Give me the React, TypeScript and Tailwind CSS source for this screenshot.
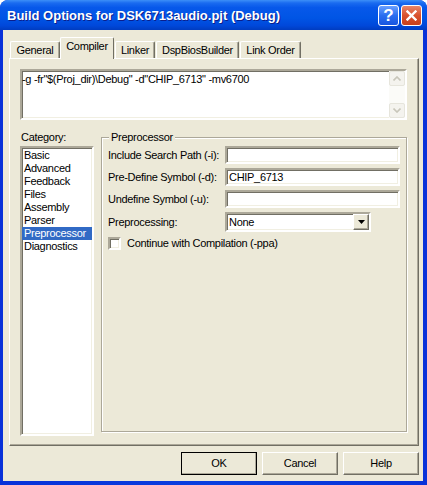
import React from "react";

const categories = [
  "Basic",
  "Advanced",
  "Feedback",
  "Files",
  "Assembly",
  "Parser",
  "Preprocessor",
  "Diagnostics",
];

const tabs = [
  { label: "General", w: "w-[50px]" },
  { label: "Compiler", w: "w-[54px]" },
  { label: "Linker", w: "w-[40px]" },
  { label: "DspBiosBuilder", w: "w-[83px]" },
  { label: "Link Order", w: "w-[61px]" },
];

// classic sunken 2px border used by edits, list and combo
const sunken =
  "border-2 border-t-[#ACA899] border-l-[#ACA899] border-b-white border-r-white shadow-[inset_1px_1px_0_#716F64,inset_-1px_-1px_0_#F1EFE2]";

const raised =
  "border border-t-white border-l-white border-r-[#716F64] border-b-[#716F64] shadow-[inset_-1px_-1px_0_#ACA899]";

const Field: React.FC<{ label: string; value?: string; className?: string }> = ({ label, value, className }) => (
  <div className={`flex items-center h-[18px] ${className || ""}`}>
    <div className="w-[117px] shrink-0 whitespace-nowrap">{label}</div>
    <div className={`w-[175px] h-[18px] bg-white flex items-center pl-[2px] ${sunken}`}>{value}</div>
  </div>
);

const Button: React.FC<{ label: string; def?: boolean }> = ({ label, def }) => (
  <div
    className={`w-[76px] h-[23px] flex items-center justify-center bg-[#ECE9D8] ${
      def ? "outline outline-1 outline-black -outline-offset-1 " : ""
    }${raised}`}
  >
    {label}
  </div>
);

const App: React.FC = () => {
  return (
    <div className="w-[427px] h-[485px] bg-white font-['Liberation_Sans',Arial,sans-serif] text-[11px] tracking-[-0.3px] text-black leading-none select-none">
      <div className="w-[427px] h-[485px] rounded-t-[8px] overflow-hidden flex flex-col bg-gradient-to-r from-[#0831D9] via-[#0A3FE0] to-[#0831D9]">
        {/* title bar */}
        <div className="h-[30px] shrink-0 flex items-center bg-[linear-gradient(to_bottom,#3C8FF8_0%,#1A6BF0_10%,#0758EA_25%,#0055E5_60%,#0048DA_85%,#003CC0_100%)]">
          <div className="ml-[7px] flex-1 text-white font-bold text-[13px] tracking-normal [text-shadow:1px_1px_0_#0B1E8C]">
            Build Options for DSK6713audio.pjt (Debug)
          </div>
          <div className="w-[21px] h-[21px] rounded-[3px] border border-white bg-[linear-gradient(to_bottom,#6AA0FF,#2A6EF0_50%,#1755E0)] flex items-center justify-center text-white font-bold text-[17px] tracking-normal">
            ?
          </div>
          <div className="ml-[2px] mr-[5px] w-[21px] h-[21px] rounded-[3px] border border-white bg-[linear-gradient(to_bottom,#E8866A,#D9522E_50%,#C8401C)] flex items-center justify-center">
            <svg width="11" height="11" viewBox="0 0 11 11">
              <path d="M1.5 1.5 L9.5 9.5 M9.5 1.5 L1.5 9.5" stroke="white" strokeWidth="2.4" strokeLinecap="square" />
            </svg>
          </div>
        </div>

        {/* client area */}
        <div className="flex-1 ml-[3px] mr-[4px] mb-[4px] bg-[#ECE9D8] flex flex-col">
          {/* tabs */}
          <div className="flex items-end h-[21px] mt-[7px] ml-[7px]">
            {tabs.map((t, i) =>
              i === 1 ? (
                <div
                  key={t.label}
                  className={`${t.w} h-[22px] relative top-[1px] z-10 bg-[#ECE9D8] border-l border-t border-r border-l-white border-t-white border-r-[#716F64] rounded-t-[2px] flex items-start justify-center pt-[3px]`}
                >
                  {t.label}
                </div>
              ) : (
                <div
                  key={t.label}
                  className={`${t.w} h-[17px] bg-[#ECE9D8] border-l border-t border-r border-l-white border-t-white border-r-[#716F64] shadow-[inset_-1px_0_0_#ACA899] rounded-t-[2px] flex items-center justify-center ${
                    i === 0 ? "" : "ml-[1px]"
                  }`}
                >
                  {t.label}
                </div>
              )
            )}
          </div>

          {/* tab page */}
          <div className={`ml-[6px] w-[410px] h-[388px] flex flex-col px-[10px] pt-[10px] ${raised}`}>
            <div className={`w-[387px] h-[51px] bg-white flex ${sunken}`}>
              <div className="flex-1 pt-[3px] whitespace-nowrap">
                {'-g -fr"$(Proj_dir)\\Debug" -d"CHIP_6713" -mv6700'}
              </div>
              <div className="w-[16px] bg-[#FBFBF8] flex flex-col justify-between">
                <div className="h-[15px] rounded-[2px] border border-[#E6E5DC] bg-[#F4F3EE] flex items-center justify-center">
                  <svg width="8" height="5" viewBox="0 0 8 5">
                    <path d="M0.5 4.5 L4 1 L7.5 4.5" stroke="#C8C6BA" strokeWidth="1.6" fill="none" />
                  </svg>
                </div>
                <div className="h-[15px] rounded-[2px] border border-[#E6E5DC] bg-[#F4F3EE] flex items-center justify-center">
                  <svg width="8" height="5" viewBox="0 0 8 5">
                    <path d="M0.5 0.5 L4 4 L7.5 0.5" stroke="#C8C6BA" strokeWidth="1.6" fill="none" />
                  </svg>
                </div>
              </div>
            </div>

            <div className="flex mt-[11px] gap-[7px]">
              {/* category list */}
              <div className="w-[74px] flex flex-col">
                <div className="h-[15px] pl-[1px] pt-[1px]">Category:</div>
                <div className={`h-[290px] bg-white pt-[1px] ${sunken}`}>
                  {categories.map((c) => (
                    <div
                      key={c}
                      className={`h-[13px] flex items-center pl-[2px] ${
                        c === "Preprocessor" ? "bg-[#316AC5] text-white" : ""
                      }`}
                    >
                      {c}
                    </div>
                  ))}
                </div>
              </div>

              {/* group box */}
              <div className="mt-[6px] w-[306px] h-[295px] relative border border-[#ACA899] shadow-[1px_1px_0_white,inset_1px_1px_0_white] pl-[6px] pt-[8px]">
                <div className="absolute -top-[7px] left-[7px] bg-[#ECE9D8] px-[2px] h-[13px] flex items-center">
                  Preprocessor
                </div>
                <Field label="Include Search Path (-i):" />
                <Field label="Pre-Define Symbol (-d):" value="CHIP_6713" className="mt-[4px]" />
                <Field label="Undefine Symbol (-u):" className="mt-[4px]" />
                <div className="flex items-center h-[20px] mt-[4px]">
                  <div className="w-[117px] shrink-0">Preprocessing:</div>
                  <div className={`w-[146px] h-[20px] bg-white flex items-center ${sunken}`}>
                    <div className="flex-1 pl-[2px]">None</div>
                    <div className={`w-[16px] h-[16px] bg-[#ECE9D8] flex items-center justify-center ${raised}`}>
                      <svg width="7" height="4" viewBox="0 0 7 4">
                        <path d="M0 0 H7 L3.5 4 Z" fill="black" />
                      </svg>
                    </div>
                  </div>
                </div>
                <div className="flex items-center mt-[5px] h-[13px]">
                  <div className={`w-[13px] h-[13px] bg-white ${sunken}`} />
                  <div className="ml-[6px]">Continue with Compilation (-ppa)</div>
                </div>
              </div>
            </div>
          </div>

          {/* buttons */}
          <div className="flex justify-end gap-[5px] mt-[6px] mr-[4px]">
            <Button label="OK" def />
            <Button label="Cancel" />
            <Button label="Help" />
          </div>
        </div>
      </div>
    </div>
  );
};

export default App;
